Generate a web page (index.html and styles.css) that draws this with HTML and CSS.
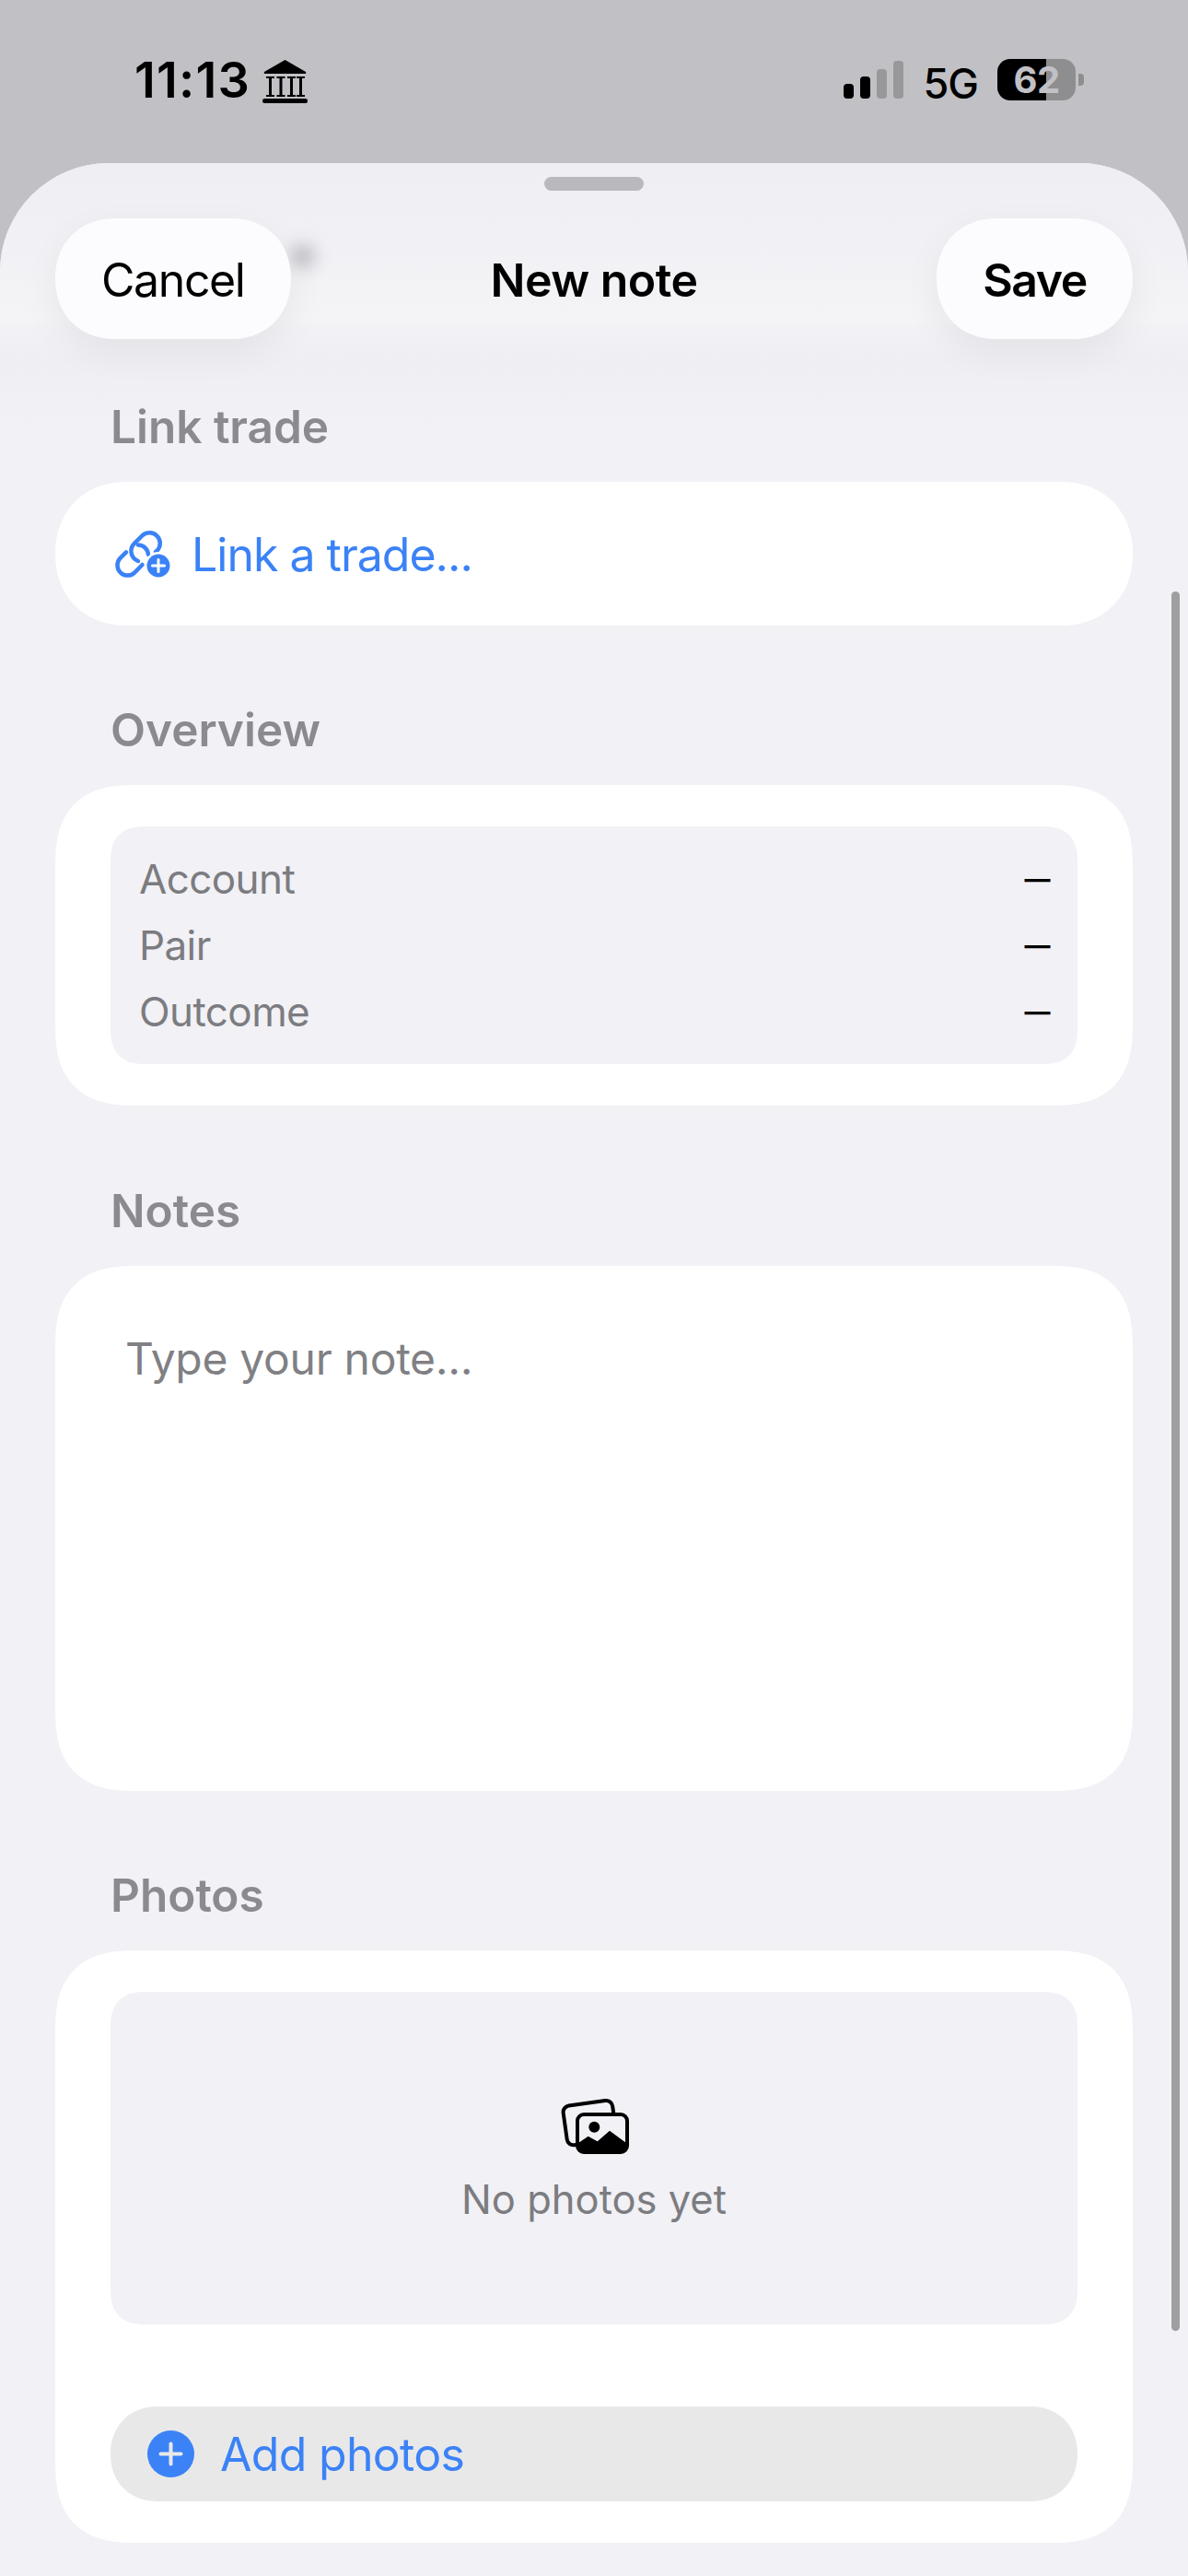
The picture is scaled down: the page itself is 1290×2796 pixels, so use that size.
FILE: index.html
```html
<!DOCTYPE html>
<html lang="en">
<head>
    <meta charset="UTF-8">
    <title>New note</title>
    <link rel="stylesheet" href="styles.css">
</head>
<body>
    <div class="status-bar">
        <div class="status-left">
            <span class="time">11:13</span>
            <svg class="bank-icon" viewBox="0 0 49 47">
                <path d="M24.5 0 47 13q1 2-1 2H3q-2 0-1-2z"/>
                <path d="M4 18h9v2h-3v18h3v2H4v-2h3V20H4zM15.5 18h9v2h-3v18h3v2h-9v-2h3V20h-3zM27 18h9v2h-3v18h3v2h-9v-2h3V20h-3zM37 18h9v2h-3v18h3v2h-9v-2h3V20h-3z"/>
                <rect x="0" y="42" width="49" height="5" rx="2.5"/>
            </svg>
        </div>
        <div class="status-right">
            <div class="signal">
                <i class="bar bar1"></i>
                <i class="bar bar2"></i>
                <i class="bar bar3 off"></i>
                <i class="bar bar4 off"></i>
            </div>
            <span class="network">5G</span>
            <div class="battery">62</div>
        </div>
    </div>

    <div class="sheet">
        <div class="glass"></div>
        <div class="scrollbar"></div>
        <div class="grabber"></div>

        <div class="nav">
            <button class="nav-btn cancel">Cancel</button>
            <div class="nav-title">New note</div>
            <button class="nav-btn save">Save</button>
        </div>

        <div class="section first">
            <div class="label">Link trade</div>
            <div class="link-card">
                <svg class="link-icon" viewBox="0 0 60 54" fill="none">
                    <g stroke="#3b82f6" stroke-width="4.5" stroke-linecap="round">
                        <path d="M25 35A11.5 11.5 0 0 1 20.9 15.9L29.9 6.9A11.5 11.5 0 0 1 46.1 23.1L44 25"/>
                        <path d="M12 25.4L5.7 31.7A11 11 0 0 0 21.3 47.3L29.5 39"/>
                        <path d="M25 17.5A11 11 0 0 1 36 28"/>
                    </g>
                    <circle cx="47" cy="40" r="15" fill="#fff"/>
                    <circle cx="47" cy="40" r="12.5" fill="#3b82f6"/>
                    <path d="M47 33.5v13M40.5 40h13" stroke="#fff" stroke-width="3" stroke-linecap="round"/>
                </svg>
                <span>Link a trade...</span>
            </div>
        </div>

        <div class="section">
            <div class="label">Overview</div>
            <div class="card">
                <div class="inner overview">
                    <div class="row"><span>Account</span><b>—</b></div>
                    <div class="row"><span>Pair</span><b>—</b></div>
                    <div class="row"><span>Outcome</span><b>—</b></div>
                </div>
            </div>
        </div>

        <div class="section notes-section">
            <div class="label">Notes</div>
            <div class="notes-card">Type your note...</div>
        </div>

        <div class="section">
            <div class="label">Photos</div>
            <div class="card">
                <div class="inner empty-photos">
                    <svg class="photos-icon" viewBox="0 0 75 61">
                        <rect x="2.5" y="8" width="54" height="43" rx="7" transform="translate(3 -2.5) rotate(-8 30 30)" fill="none" stroke="#000" stroke-width="4"/>
                        <rect x="19" y="18" width="54" height="41" rx="7" fill="#f1f1f6" stroke="#000" stroke-width="4"/>
                        <circle cx="37.3" cy="31.7" r="6"/>
                        <path d="M20 49l10.7-7.3 10 5.6L54 35.7 72 49v4q0 7-7 7H27q-7 0-7-7z"/>
                    </svg>
                    <span>No photos yet</span>
                </div>
                <div class="add-btn">
                    <svg class="plus-icon" viewBox="0 0 51 51">
                        <circle cx="25.5" cy="25.5" r="25.5" fill="#3b82f6"/>
                        <path d="M25.5 14.5v22M14.5 25.5h22" stroke="#e8e8e9" stroke-width="4" stroke-linecap="round"/>
                    </svg>
                    <span>Add photos</span>
                </div>
            </div>
        </div>
    </div>
</body>
</html>
```

FILE: styles.css
```css
html,body{
    margin:0; padding:0;
}
body{
    width:1290px; height:2796px; overflow:hidden;
    background:#c1c0c5; color:#000;
    font-family:Inter,"Noto Sans",sans-serif;
}

/* status bar */
.status-bar{
    height:177px; box-sizing:border-box; padding:0 122px 0 146px;
    display:flex; justify-content:space-between; align-items:flex-start;
}
.status-left{
    display:flex; align-items:flex-start; gap:13px; padding-top:56px;
}
.time{
    font-size:54px; font-weight:600; line-height:62px; letter-spacing:1.2px;
}
.bank-icon{
    width:49px; height:47px; margin-top:9px;
}
.status-right{
    display:flex; align-items:flex-start; padding-top:64px;
}
.signal{
    display:flex; align-items:flex-end; gap:7px; height:43px;
}
.bar{
    display:block; width:11px; background:#000; border-radius:4px;
}
.bar1{height:16px;}
.bar2{height:24px;}
.bar3{height:32px;}
.bar4{height:41px;}
.bar.off{background:#98989a;}
.network{
    font-size:45px; font-weight:500; line-height:54px; margin-left:22px; letter-spacing:-1px;
}
.battery{
    position:relative; width:85px; height:45px; margin-left:21px; border-radius:14px;
    background:linear-gradient(to right,#000 53px,#8e8e90 53px);
    color:#c1c0c5; font-size:40px; font-weight:700; line-height:45px; text-align:center;
    letter-spacing:-.5px;
}
.battery::after{
    content:""; position:absolute; left:88px; top:16px; width:6px; height:13px;
    background:#8e8e90; border-radius:0 4px 4px 0;
}

/* sheet */
.sheet{
    position:relative; height:2619px; box-sizing:border-box; padding:15px 60px 0;
    background:#f1f1f6; border-radius:118px 118px 0 0; overflow:hidden;
}
.glass{
    position:absolute; left:0; right:0; top:0; height:300px;
    background:linear-gradient(to bottom,#eeeef3 0,#f4f4f7 170px,#f2f2f6 178px,#efeff3 215px,#f1f1f6 290px);
}
.scrollbar{
    position:absolute; left:1272px; top:465px; width:9px; height:1888px;
    background:#9f9fa1; border-radius:5px;
}
.grabber{
    position:relative; width:108px; height:15px; margin:0 auto;
    background:#b9b8bd; border-radius:8px;
}

.nav{
    position:relative; z-index:1; display:grid; grid-template-columns:1fr auto 1fr; align-items:center;
    margin-top:30px;
}
.nav-btn{
    height:131px; padding:2px 50px 0; border:none; border-radius:66px;
    background:#fcfcfe; box-shadow:0 14px 40px rgba(0,0,0,.06);
    font-family:inherit; font-size:50px; color:#000; letter-spacing:-1.4px;
    corner-shape:superellipse(1.1);
}
.cancel{
    position:relative; justify-self:start; font-weight:400;
}
.cancel::after{
    content:""; position:absolute; left:256px; top:28px; width:26px; height:26px;
    background:#bcbcc0; border-radius:50%; filter:blur(9px); z-index:-1;
}
.save{
    justify-self:end; font-weight:600;
}
.nav-title{
    padding-top:2px; font-size:50px; font-weight:600; letter-spacing:-.5px;
}

/* sections */
.section{
    position:relative; margin-top:83px;
}
.section.first{
    margin-top:65px;
}
.section.notes-section{
    margin-top:84px;
}
.label{
    padding-left:60px; font-size:49.5px; font-weight:600; line-height:60px; color:#8a8a8f;
    margin-bottom:30px;
}
.link-card{
    height:156px; box-sizing:border-box; padding:2px 0 0 65px;
    display:flex; align-items:center; gap:23px;
    background:#fff; border-radius:78px; corner-shape:superellipse(1.1);
    color:#3b82f6; font-size:50px; letter-spacing:-1px;
}
.link-icon{
    width:60px; height:54px; margin-top:-2px;
}
.card{
    background:#fff; border-radius:90px; padding:45px 60px; corner-shape:superellipse(1.4);
}
.inner{
    background:#f1f1f6; border-radius:40px; corner-shape:superellipse(1.4);
}
.overview{
    padding:21px 30px 21px 31px;
}
.row{
    display:flex; justify-content:space-between;
    font-size:44px; line-height:72px; color:#7c7c80; letter-spacing:-.6px;
}
.row b{
    font-weight:700; color:#000; font-size:28px;
}
.notes-card{
    height:570px; box-sizing:border-box; padding:72px 0 0 76px;
    background:#fff; border-radius:90px; corner-shape:superellipse(1.4);
    font-size:48px; line-height:58px; color:#808084; letter-spacing:-.3px;
}
.empty-photos{
    height:361px; box-sizing:border-box; padding-top:4px;
    display:flex; flex-direction:column; align-items:center; justify-content:center; gap:24px;
    font-size:43.5px; line-height:50px; color:#7c7c80;
}
.photos-icon{
    width:75px; height:61px;
}
.add-btn{
    height:103px; box-sizing:border-box; margin-top:89px; padding-left:40px;
    display:flex; align-items:center; gap:28px;
    background:#e8e8e9; border-radius:52px; corner-shape:superellipse(1.1);
    color:#3b82f6; font-size:50px; letter-spacing:-.7px;
}
.plus-icon{
    width:51px; height:51px;
}
```
